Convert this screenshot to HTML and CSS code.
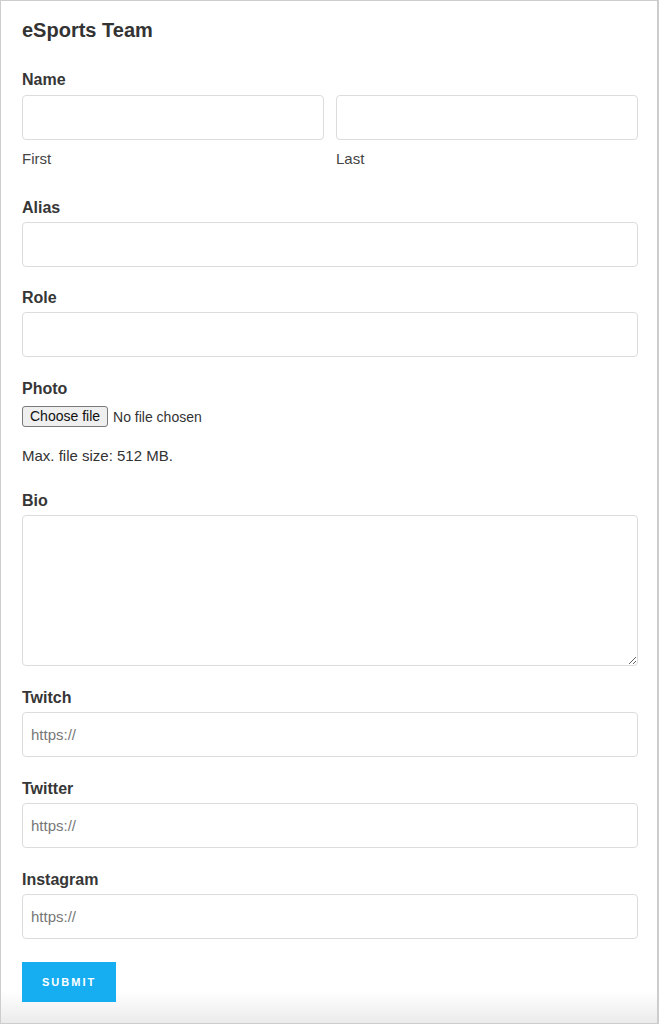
FILE: index.html
```html
<!DOCTYPE html>
<html lang="en">
<head>
    <meta charset="UTF-8">
    <meta name="viewport" content="width=device-width, initial-scale=1.0">
    <title>eSports Team</title>
    <link rel="stylesheet" href="styles.css">
</head>
<body>
    <div class="form-container">
        <h2 class="form-title">eSports Team</h2>

        <form class="team-form" onsubmit="return false;">
            <div class="field field-name">
                <label class="field-label">Name</label>
                <div class="name-row">
                    <div class="name-part">
                        <input type="text" class="input-field">
                        <span class="sub-label">First</span>
                    </div>
                    <div class="name-part">
                        <input type="text" class="input-field">
                        <span class="sub-label">Last</span>
                    </div>
                </div>
            </div>

            <div class="field field-alias">
                <label class="field-label">Alias</label>
                <input type="text" class="input-field">
            </div>

            <div class="field">
                <label class="field-label">Role</label>
                <input type="text" class="input-field">
            </div>

            <div class="field field-photo">
                <label class="field-label">Photo</label>
                <div class="file-row">
                    <label class="file-button">
                        Choose file
                        <input type="file" class="file-input" onchange="document.getElementById('fileName').textContent = this.files.length ? this.files[0].name : 'No file chosen'">
                    </label>
                    <span class="file-name" id="fileName">No file chosen</span>
                </div>
                <p class="field-description">Max. file size: 512 MB.</p>
            </div>

            <div class="field">
                <label class="field-label">Bio</label>
                <textarea class="textarea-field"></textarea>
            </div>

            <div class="field">
                <label class="field-label">Twitch</label>
                <input type="url" class="input-field" placeholder="https://">
            </div>

            <div class="field">
                <label class="field-label">Twitter</label>
                <input type="url" class="input-field" placeholder="https://">
            </div>

            <div class="field field-last">
                <label class="field-label">Instagram</label>
                <input type="url" class="input-field" placeholder="https://">
            </div>

            <button type="submit" class="submit-button">Submit</button>
        </form>
    </div>
</body>
</html>
```

FILE: styles.css
```css
* {
    margin: 0;
    padding: 0;
    box-sizing: border-box;
}

body {
    font-family: 'Liberation Sans', Arial, Helvetica, sans-serif;
    color: #333;
    background: #fff;
}

.form-container {
    width: 659px;
    height: 1024px;
    padding: 15px 19px 0 21px;
    border: 1px solid #cdcdcd;
    border-right-width: 2px;
    background: linear-gradient(to bottom, #fff calc(100% - 32px), #ebebeb 100%);
}

.form-title {
    font-size: 20px;
    line-height: 28px;
    font-weight: bold;
    color: #333;
    margin-bottom: 25px;
}

.field {
    display: flex;
    flex-direction: column;
    margin-bottom: 21px;
}

.field-label {
    font-size: 16px;
    line-height: 20px;
    font-weight: bold;
    color: #363636;
    padding-top: 1px;
    margin-bottom: 4px;
}

.field-name .field-label {
    margin-bottom: 5px;
}

.field-alias {
    margin-bottom: 20px;
}

.name-row {
    display: grid;
    grid-template-columns: 1fr 1fr;
    gap: 12px;
}

.name-part {
    display: flex;
    flex-direction: column;
}

.sub-label {
    font-size: 15px;
    line-height: 18px;
    color: #444;
    margin-top: 10px;
    margin-bottom: 8px;
}

.input-field {
    width: 100%;
    height: 45px;
    padding: 0 8px;
    border: 1px solid #dcdcdc;
    border-radius: 4px;
    font-family: inherit;
    font-size: 15px;
    color: #333;
    outline: none;
    background: #fff;
}

.input-field::placeholder {
    color: #777;
}

.input-field:focus,
.textarea-field:focus {
    border-color: #999;
}

.file-row {
    display: flex;
    align-items: center;
    gap: 5px;
    margin-top: 3px;
    font-size: 14px;
}

.file-button {
    display: inline-block;
    height: 21px;
    line-height: 19px;
    padding: 0 7px;
    color: #111;
    background: #efefef;
    border: 1px solid #7a7a7a;
    border-radius: 3px;
    cursor: pointer;
}

.file-input {
    display: none;
}

.file-name {
    color: #333;
}

.field-description {
    font-size: 15px;
    line-height: 20px;
    color: #333;
    margin-top: 19px;
    margin-bottom: 3px;
}

.textarea-field {
    width: 100%;
    height: 151px;
    padding: 8px;
    border: 1px solid #dcdcdc;
    border-radius: 4px;
    font-family: inherit;
    font-size: 15px;
    outline: none;
    resize: vertical;
}

.field-last {
    margin-bottom: 23px;
}

.submit-button {
    display: block;
    height: 40px;
    padding: 0 20px 0 20px;
    background: #16aef0;
    color: #fff;
    border: none;
    font-family: inherit;
    font-size: 11px;
    font-weight: bold;
    letter-spacing: 2px;
    text-transform: uppercase;
    cursor: pointer;
}

.submit-button:hover {
    background: #0e9bd8;
}
```
